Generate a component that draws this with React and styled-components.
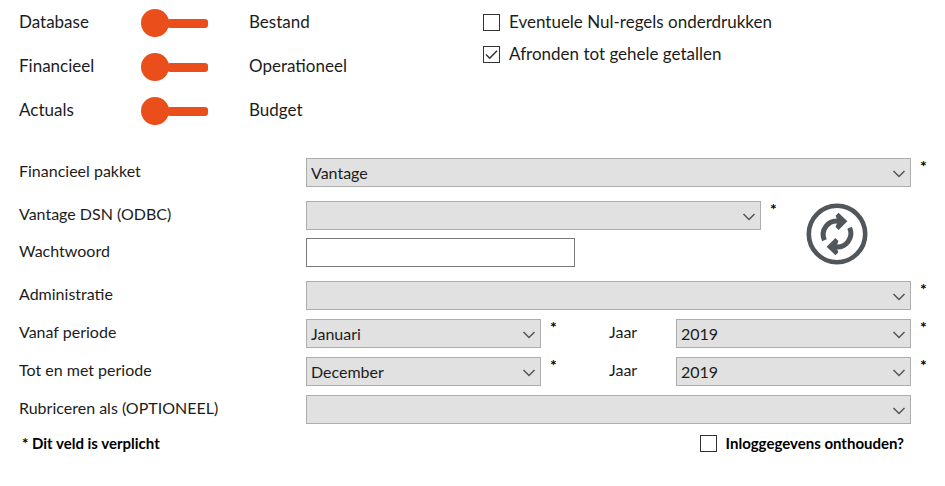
import { useState } from "react";
import styled, { createGlobalStyle } from "styled-components";

const GlobalStyle = createGlobalStyle`
  * {
    box-sizing: border-box;
  }
  body {
    margin: 0;
    background: #fff;
    color: #1c1c1c;
    font: 16px/20px Lato, Carlito, "Open Sans", sans-serif;
  }
`;

const Page = styled.main`
  padding: 0 0 24px 19px;
`;

const TopBar = styled.div`
  display: grid;
  grid-template-columns: 464px 1fr;
  align-items: start;
  padding-bottom: 26px;
  font-size: 17px;
`;

const SwitchList = styled.div`
  display: grid;
`;

const SwitchRow = styled.label`
  display: grid;
  grid-template-columns: 122px 108px 1fr;
  align-items: center;
  height: 44px;
`;

const Switch = styled.input`
  appearance: none;
  display: flex;
  align-items: center;
  flex-direction: ${({ checked }) => (checked ? "row-reverse" : "row")};
  width: 67px;
  height: 28px;
  margin: 2px 0 0;
  cursor: pointer;
  &::before {
    content: "";
    width: 28px;
    height: 28px;
    border-radius: 50%;
    background: #e94e1b;
  }
  &::after {
    content: "";
    flex: 1;
    height: 9px;
    margin: 0 0 0 -2px;
    border-radius: 3px;
    background: #e94e1b;
  }
`;

const OptionList = styled.div`
  display: grid;
  gap: 12px;
  padding-top: 12px;
`;

const CheckLabel = styled.label`
  display: flex;
  align-items: center;
  gap: 9px;
`;

const Tick = styled.span`
  display: grid;
  flex: none;
  width: 17px;
  height: 17px;
  input,
  svg {
    grid-area: 1 / 1;
    width: 17px;
    height: 17px;
    margin: 0;
    pointer-events: none;
  }
  input {
    appearance: none;
    border: 1px solid #333;
    background: #fff;
    pointer-events: auto;
  }
`;

const Row = styled.div`
  display: grid;
  grid-template-columns: 287px 1fr ${({ $end }) => $end || 34}px;
  margin-bottom: ${({ $gap = 9 }) => $gap}px;
`;

const FieldLabel = styled.label`
  line-height: 26px;
`;

const SelectBox = styled.div`
  display: grid;
  flex: 1;
  min-width: 0;
  select,
  svg {
    grid-area: 1 / 1;
  }
  svg {
    place-self: center end;
    margin: 2px 5px 0 0;
    pointer-events: none;
  }
`;

const StyledSelect = styled.select`
  appearance: none;
  width: 100%;
  height: 29px;
  padding: 0 26px 0 4px;
  border: 1px solid #adadad;
  border-radius: 0;
  background: #e1e1e1;
  color: #1c1c1c;
  font: inherit;
`;

const Password = styled.input`
  width: 269px;
  height: 29px;
  padding: 0 5px;
  border: 1px solid #7a7a7a;
  background: #fff;
  font: inherit;
`;

const Star = styled.span`
  width: ${({ $width }) => ($width ? `${$width}px` : "auto")};
  padding-left: 9px;
  color: #000;
  font-weight: bold;
  line-height: 16px;
`;

const Period = styled.div`
  display: flex;
`;

const YearLabel = styled(FieldLabel)`
  width: 67px;
`;

const Source = styled.div`
  display: grid;
  grid-template-columns: 1fr 62px;
  align-items: center;
  padding-right: 77px;
  margin-bottom: 14px;
`;

const RefreshButton = styled.button`
  width: 62px;
  height: 62px;
  padding: 0;
  border: none;
  background: none;
  cursor: pointer;
  svg {
    display: block;
  }
`;

const Footer = styled.footer`
  display: flex;
  align-items: center;
  justify-content: space-between;
  padding: 0 41px 0 3px;
  font-size: 15px;
  font-weight: bold;
  color: #000;
`;

const Check = ({ label, defaultChecked = false }) => {
  const [checked, setChecked] = useState(defaultChecked);
  return (
    <CheckLabel>
      <Tick>
        <input type="checkbox" checked={checked} onChange={e => setChecked(e.target.checked)} />
        {checked && (
          <svg viewBox="0 0 17 17" fill="none" stroke="#333" strokeWidth="1.5">
            <path d="M3 8.5 6.7 12.2 14 4.7" />
          </svg>
        )}
      </Tick>
      {label}
    </CheckLabel>
  );
};

const Toggle = ({ left, right }) => {
  const [checked, setChecked] = useState(false);
  return (
    <SwitchRow>
      <span>{left}</span>
      <Switch type="checkbox" role="switch" checked={checked} onChange={e => setChecked(e.target.checked)} />
      <span>{right}</span>
    </SwitchRow>
  );
};

const Select = ({ id, options = [""] }) => (
  <SelectBox>
    <StyledSelect id={id}>
      {options.map(option => (
        <option key={option}>{option}</option>
      ))}
    </StyledSelect>
    <svg width="14" height="8" viewBox="0 0 14 8" fill="none" stroke="#555" strokeWidth="1.5">
      <path d="M1.5 1 7 6.5 12.5 1" />
    </svg>
  </SelectBox>
);

const PeriodRow = ({ id, label, month }) => (
  <Row>
    <FieldLabel htmlFor={id}>{label}</FieldLabel>
    <Period>
      <Select id={id} options={[month]} />
      <Star $width={68}>*</Star>
      <YearLabel htmlFor={`${id}-jaar`}>Jaar</YearLabel>
      <Select id={`${id}-jaar`} options={["2019"]} />
    </Period>
    <Star>*</Star>
  </Row>
);

const RefreshIcon = () => (
  <svg width="62" height="62" viewBox="0 0 62 62" fill="none" stroke="#50565a">
    <circle cx="31" cy="31" r="28.2" strokeWidth="4.6" />
    <path d="M18.4 37.2A13.6 13.6 0 0 1 33 18.2" strokeWidth="5" />
    <path d="M43.6 24.8A13.6 13.6 0 0 1 29 43.8" strokeWidth="5" />
    <path d="M32.5 9.8 41.4 18.2 32.6 27 29.6 24 31 20V16L29.6 12.8Z" fill="#50565a" stroke="none" />
    <path d="M29.5 52.2 20.6 43.8 29.4 35 32.4 38 31 42V46L32.4 49.2Z" fill="#50565a" stroke="none" />
  </svg>
);

export default function App() {
  return (
    <>
      <GlobalStyle />
      <Page>
        <TopBar>
          <SwitchList>
            <Toggle left="Database" right="Bestand" />
            <Toggle left="Financieel" right="Operationeel" />
            <Toggle left="Actuals" right="Budget" />
          </SwitchList>
          <OptionList>
            <Check label="Eventuele Nul-regels onderdrukken" />
            <Check label="Afronden tot gehele getallen" defaultChecked />
          </OptionList>
        </TopBar>

        <Row $gap={14}>
          <FieldLabel htmlFor="pakket">Financieel pakket</FieldLabel>
          <Select id="pakket" options={["Vantage"]} />
          <Star>*</Star>
        </Row>

        <Source>
          <div>
            <Row $end={45} $gap={8}>
              <FieldLabel htmlFor="dsn">Vantage DSN (ODBC)</FieldLabel>
              <Select id="dsn" />
              <Star>*</Star>
            </Row>
            <Row $end={45} $gap={0}>
              <FieldLabel htmlFor="wachtwoord">Wachtwoord</FieldLabel>
              <Password id="wachtwoord" type="password" />
            </Row>
          </div>
          <RefreshButton type="button" aria-label="Vernieuwen">
            <RefreshIcon />
          </RefreshButton>
        </Source>

        <Row>
          <FieldLabel htmlFor="administratie">Administratie</FieldLabel>
          <Select id="administratie" />
          <Star>*</Star>
        </Row>
        <PeriodRow id="vanaf" label="Vanaf periode" month="Januari" />
        <PeriodRow id="tot" label="Tot en met periode" month="December" />
        <Row>
          <FieldLabel htmlFor="rubriceren">Rubriceren als (OPTIONEEL)</FieldLabel>
          <Select id="rubriceren" />
        </Row>

        <Footer>
          <span>* Dit veld is verplicht</span>
          <Check label="Inloggegevens onthouden?" />
        </Footer>
      </Page>
    </>
  );
}
